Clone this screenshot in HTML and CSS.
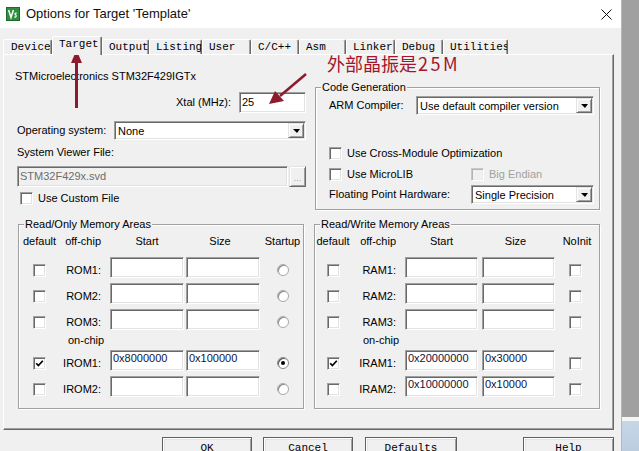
FILE: index.html
```html
<!DOCTYPE html>
<html>
<head>
<meta charset="utf-8">
<title>Options for Target 'Template'</title>
<link rel="stylesheet" href="styles.css">
</head>
<body>
<div class="screen">
  <div class="dialog">
    <div class="titlebar">
      <svg class="appicon" viewBox="0 0 14 14">
        <rect x="0.5" y="0.5" width="13" height="13" fill="#2f8d3e" stroke="#1d6a2a"/>
        <path d="M2.6 3 L5 10.5 L7.4 3" fill="none" stroke="#fff" stroke-width="1.5"/>
        <path d="M10.8 6.2 C9.2 5.6 8.2 6.6 9.4 7.6 C10.8 8.6 10.2 10.6 8.2 10" fill="none" stroke="#fff" stroke-width="1.2"/>
      </svg>
      <span class="title">Options for Target 'Template'</span>
      <svg class="close" viewBox="0 0 11 11">
        <path d="M0.5 0.5 L10.5 10.5 M10.5 0.5 L0.5 10.5" stroke="#111" stroke-width="1"/>
      </svg>
    </div>

    <div class="tabs">
      <div class="tab t-device">Device</div>
      <div class="tab t-target active">Target</div>
      <div class="tab t-output">Output</div>
      <div class="tab t-listing">Listing</div>
      <div class="tab t-user">User</div>
      <div class="tab t-cc">C/C++</div>
      <div class="tab t-asm">Asm</div>
      <div class="tab t-linker">Linker</div>
      <div class="tab t-debug">Debug</div>
      <div class="tab t-util">Utilities</div>
    </div>

    <div class="panel">
      <div class="top">
        <div class="left">
          <div class="device">STMicroelectronics STM32F429IGTx</div>
          <div class="xtal-row">
            <span>Xtal (MHz):</span>
            <div class="edit xtal">25</div>
          </div>
          <div class="os-row">
            <span class="os-label">Operating system:</span>
            <div class="select os"><span class="sel-text">None</span><span class="dd"><i class="tri"></i></span></div>
          </div>
          <div class="svf-label">System Viewer File:</div>
          <div class="svf-row">
            <div class="edit svf">STM32F429x.svd</div>
            <div class="dots">...</div>
          </div>
          <div class="check-row custom"><span class="cb"></span><span class="cb-label">Use Custom File</span></div>
        </div>

        <fieldset class="group code">
          <legend>Code Generation</legend>
          <div class="arm-row">
            <span class="arm-label">ARM Compiler:</span>
            <div class="select arm"><span class="sel-text">Use default compiler version</span><span class="dd"><i class="tri"></i></span></div>
          </div>
          <div class="check-row cmo"><span class="cb"></span><span class="cb-label">Use Cross-Module Optimization</span></div>
          <div class="check-row micro">
            <div class="check-row microlib"><span class="cb"></span><span class="cb-label">Use MicroLIB</span></div>
            <div class="check-row big"><span class="cb cb-disabled"></span><span class="cb-label">Big Endian</span></div>
          </div>
          <div class="fp-row">
            <span class="fp-label">Floating Point Hardware:</span>
            <div class="select fp"><span class="sel-text">Single Precision</span><span class="dd"><i class="tri"></i></span></div>
          </div>
        </fieldset>
      </div>

      <div class="mem">
        <fieldset class="group memgroup ro">
          <legend>Read/Only Memory Areas</legend>
          <div class="mrow head">
            <span class="c1">default</span><span class="c2">off-chip</span><span class="c3">Start</span><span class="c4">Size</span><span class="c5">Startup</span>
          </div>
          <div class="mrow r1">
            <span class="cb ctr"></span><span class="lbl">ROM1:</span><div class="edit"></div><div class="edit"></div><span class="radio ctr"></span>
          </div>
          <div class="mrow rn">
            <span class="cb ctr"></span><span class="lbl">ROM2:</span><div class="edit"></div><div class="edit"></div><span class="radio ctr"></span>
          </div>
          <div class="mrow rn">
            <span class="cb ctr"></span><span class="lbl">ROM3:</span><div class="edit"></div><div class="edit"></div><span class="radio ctr"></span>
          </div>
          <div class="onchip">on-chip</div>
          <div class="mrow ri">
            <span class="cb ctr"><svg class="tick" viewBox="0 0 9 9"><path d="M1.2 4.2 L3.4 6.6 L7.8 1.8" fill="none" stroke="#000" stroke-width="1.7"/></svg></span><span class="lbl">IROM1:</span><div class="edit">0x8000000</div><div class="edit">0x100000</div><span class="radio ctr on"><i></i></span>
          </div>
          <div class="mrow rn">
            <span class="cb ctr"></span><span class="lbl">IROM2:</span><div class="edit"></div><div class="edit"></div><span class="radio ctr"></span>
          </div>
        </fieldset>

        <fieldset class="group memgroup rw">
          <legend>Read/Write Memory Areas</legend>
          <div class="mrow head">
            <span class="c1">default</span><span class="c2">off-chip</span><span class="c3">Start</span><span class="c4">Size</span><span class="c5">NoInit</span>
          </div>
          <div class="mrow r1">
            <span class="cb ctr"></span><span class="lbl">RAM1:</span><div class="edit"></div><div class="edit"></div><span class="cb ni"></span>
          </div>
          <div class="mrow rn">
            <span class="cb ctr"></span><span class="lbl">RAM2:</span><div class="edit"></div><div class="edit"></div><span class="cb ni"></span>
          </div>
          <div class="mrow rn">
            <span class="cb ctr"></span><span class="lbl">RAM3:</span><div class="edit"></div><div class="edit"></div><span class="cb ni"></span>
          </div>
          <div class="onchip">on-chip</div>
          <div class="mrow ri">
            <span class="cb ctr"><svg class="tick" viewBox="0 0 9 9"><path d="M1.2 4.2 L3.4 6.6 L7.8 1.8" fill="none" stroke="#000" stroke-width="1.7"/></svg></span><span class="lbl">IRAM1:</span><div class="edit">0x20000000</div><div class="edit">0x30000</div><span class="cb ni"></span>
          </div>
          <div class="mrow rn">
            <span class="cb ctr"></span><span class="lbl">IRAM2:</span><div class="edit">0x10000000</div><div class="edit">0x10000</div><span class="cb ni"></span>
          </div>
        </fieldset>
      </div>
    </div>

    <div class="buttons">
      <div class="btn b-ok">OK</div>
      <div class="btn b-cancel">Cancel</div>
      <div class="btn b-defaults">Defaults</div>
      <div class="btn b-help">Help</div>
    </div>
  </div>

  <div class="backdrop">
    <div class="bd-top"></div>
    <div class="bd-line"></div>
    <div class="bd-bottom"></div>
  </div>
</div>

<div class="annot">
  <svg class="arrows" width="639" height="451" viewBox="0 0 639 451">
    <line x1="76.5" y1="60" x2="76.5" y2="108" stroke="#8e1b2c" stroke-width="3"/>
    <polygon points="76.5,50 71,63 82,63" fill="#8e1b2c"/>
    <line x1="306" y1="74" x2="280" y2="96" stroke="#8e1b2c" stroke-width="2.6"/>
    <polygon points="269,104 275,91 284,101" fill="#8e1b2c"/>
  </svg>
  <div class="note">外部晶振是<span class="note-num">25M</span></div>
</div>
</body>
</html>
```
FILE: styles.css
```css
* { box-sizing: border-box; }
html, body { margin: 0; padding: 0; }
body {
  width: 639px; height: 451px; overflow: hidden; position: relative;
  background: #f0f0f0; color: #000;
  font: 11px/13px "Liberation Sans", Arial, sans-serif;
}
.screen { display: flex; height: 451px; }
.dialog { width: 621px; flex: none; display: flex; flex-direction: column; }

/* right backdrop (window behind) */
.backdrop { flex: 1; display: flex; flex-direction: column; border-left: 1px solid #b8b8b8; }
.bd-top { flex: 1; background: #a0a0a0; }
.bd-line { height: 4px; background: #f5f5f5; }
.bd-bottom { height: 30px; background: linear-gradient(#c6d6e7, #bccde0); }

/* title bar */
.titlebar {
  height: 28px; flex: none; background: #fff;
  display: flex; align-items: center; padding: 0 9px 0 6px;
}
.appicon { width: 14px; height: 14px; flex: none; margin-top: -1px; }
.title { margin-left: 6px; font: 13px/16px "Liberation Sans", Arial, sans-serif; color: #111; }
.close { margin-left: auto; width: 11px; height: 11px; }

/* tabs */
.tabs {
  height: 26px; flex: none; display: flex; align-items: flex-end; padding-left: 3px;
  font: 11px/13px "Liberation Mono", "Courier New", monospace; color: #000;
}
.tab {
  height: 15px; padding: 1px 0 0 6px; background: #f0f0f0;
  border-top: 1px solid #fff; border-left: 1px solid #fff; border-right: 1px solid #696969;
  border-radius: 2px 2px 0 0; box-shadow: inset -1px 0 0 #a0a0a0;
  white-space: nowrap; overflow: hidden;
}
.tab.active { height: 19px; margin-bottom: -1px; position: relative; z-index: 1; }
.t-device { width: 49px; padding-left: 7px; }
.t-target { width: 50px; }
.t-output { width: 47px; }
.t-listing { width: 53px; }
.t-user { width: 49px; }
.t-cc { width: 48px; }
.t-asm { width: 47px; }
.t-linker { width: 49px; }
.t-debug { width: 48px; }
.t-util { width: 65px; }

/* tab page */
.panel {
  flex: none; margin-left: 3px; width: 611px; height: 376px;
  border: 1px solid #fff; border-right-color: #696969; border-bottom-color: #696969;
  box-shadow: inset -1px -1px 0 #a0a0a0;
  padding: 0 13px 0 11px; display: flex; flex-direction: column;
}
.top { height: 163px; flex: none; display: grid; grid-template-columns: 291px 285px; column-gap: 9px; align-items: start; }

/* common controls */
.edit {
  height: 21px; background: #fff; white-space: nowrap; overflow: hidden;
  border: 1px solid; border-color: #a0a0a0 #fff #fff #a0a0a0;
  box-shadow: inset 1px 1px 0 #696969, inset -1px -1px 0 #e3e3e3;
  padding: 0 2px;
}
.select {
  height: 19px; display: flex; background: #fff; padding: 1px;
  border: 1px solid; border-color: #a0a0a0 #fff #fff #a0a0a0;
  box-shadow: inset 1px 1px 0 #696969, inset -1px -1px 0 #e3e3e3;
}
.sel-text { flex: 1; padding: 2px 0 0 2px; white-space: nowrap; overflow: hidden; }
.dd {
  width: 16px; height: 15px; flex: none; background: #f0f0f0;
  border: 1px solid; border-color: #e3e3e3 #696969 #696969 #e3e3e3;
  box-shadow: inset 1px 1px 0 #fff, inset -1px -1px 0 #a0a0a0;
  display: flex; align-items: center; justify-content: center;
}
.tri { width: 0; height: 0; border-left: 4px solid transparent; border-right: 3px solid transparent; border-top: 4px solid #000; margin-left: 1px; }
.cb {
  width: 13px; height: 13px; flex: none; background: #fff;
  border: 1px solid; border-color: #a0a0a0 #fff #fff #a0a0a0;
  box-shadow: inset 1px 1px 0 #696969, inset -1px -1px 0 #e3e3e3;
  display: flex; align-items: center; justify-content: center;
}
.cb-disabled { background: #f0f0f0; border-color: #c8c8c8 #fff #fff #c8c8c8; box-shadow: inset 1px 1px 0 #b4b4b4, inset -1px -1px 0 #ececec; }
.tick { width: 9px; height: 9px; }
.check-row { display: flex; align-items: center; }
.cb-label { margin-left: 5px; white-space: nowrap; }
.radio {
  width: 12px; height: 12px; border-radius: 50%; background: #fff;
  border: 1px solid #a8a8a8; box-shadow: inset 1px 1px 0 #8a8a8a;
  display: flex; align-items: center; justify-content: center;
}
.radio.on { border-color: #8a8a8a; box-shadow: inset 1px 1px 0 #555; }
.radio i { width: 4px; height: 4px; border-radius: 50%; background: #000; }

/* left column */
.left { display: flex; flex-direction: column; }
.device { margin-top: 15px; }
.xtal-row { margin-top: 9px; display: flex; justify-content: flex-end; align-items: center; gap: 8px; }
.xtal { width: 67px; padding-top: 3px; }
.os-row { margin-top: 8px; display: flex; align-items: center; }
.os-label { width: 99px; padding-left: 2px; }
.os { width: 192px; }
.svf-label { margin-top: 6px; padding-left: 2px; }
.svf-row { margin-top: 7px; display: flex; gap: 1px; padding-left: 2px; }
.svf { width: 271px; background: #f0f0f0; color: #6d6d6d; padding-top: 3px; }
.dots {
  width: 17px; height: 21px; background: #f0f0f0;
  border: 1px solid; border-color: #e3e3e3 #696969 #696969 #e3e3e3;
  box-shadow: inset 1px 1px 0 #fff, inset -1px -1px 0 #a0a0a0;
  color: #a0a0a0; font-size: 9px; line-height: 9px; text-align: center; padding-top: 7px;
}
.custom { margin-top: 5px; padding-left: 5px; }

/* group boxes */
.group {
  margin: 0; padding: 0; min-width: 0;
  border: 1px solid #a0a0a0;
  box-shadow: inset 1px 1px 0 #fff, 1px 1px 0 #fff;
}
.group legend { padding: 0 1px; margin-left: 5px; background: #f0f0f0; line-height: 13px; }
.code { margin-top: 26px; height: 129px; }
.arm-row { margin-top: 2px; display: flex; align-items: center; }
.arm-label { width: 100px; padding-left: 13px; }
.arm { width: 178px; }
.cmo { margin-top: 32px; padding-left: 13px; }
.micro { margin-top: 8px; padding-left: 13px; }
.microlib { width: 142px; }
.big .cb-label { color: #a0a0a0; }
.fp-row { margin-top: 4px; display: flex; align-items: center; }
.fp-label { width: 155px; padding-left: 13px; }
.fp { width: 123px; }

/* memory areas */
.mem { display: grid; grid-template-columns: 286px 286px; column-gap: 10px; margin-left: 3px; }
.memgroup { height: 191px; }
.mrow { display: grid; align-items: center; }
.ro .mrow { grid-template-columns: 41px 50px 76px 76px 1fr; }
.rw .mrow { grid-template-columns: 36px 54px 77px 73px 1fr; }
.mrow .c1, .mrow .c3, .mrow .c4, .mrow .c5 { text-align: center; }
.mrow .c2, .mrow .lbl { text-align: right; padding-right: 9px; white-space: nowrap; }
.ro .c3 { padding-right: 2px; }
.ro .c4 { padding-right: 8px; }
.rw .c3 { padding-right: 4px; }
.rw .c4 { padding-right: 6px; }
.head { margin-top: 4px; }
.r1 { margin-top: 9px; }
.rn { margin-top: 5px; }
.ri { margin-top: 3px; }
.onchip { margin-top: 4px; height: 13px; }
.ro .onchip { padding-left: 49px; }
.rw .onchip { padding-left: 48px; }
.mem .edit { width: 74px; padding-top: 1px; color: #10133a; }
.rw .edit { width: 73px; }
.ctr { justify-self: center; }
.mrow .cb, .mrow .lbl, .mrow .radio { margin-top: 5px; }
.mrow .ni { justify-self: start; margin-left: 14px; }

/* buttons */
.buttons {
  flex: 1; display: flex; align-items: flex-start; margin-top: 7px;
  font: 11px/13px "Liberation Mono", "Courier New", monospace;
}
.btn {
  height: 23px; text-align: center; padding-top: 4px; background: #f0f0f0;
  border: 1px solid #5f5f5f;
  box-shadow: inset 1px 1px 0 #fff, inset -1px -1px 0 #a0a0a0, inset 2px 2px 0 #e3e3e3;
}
.b-ok { margin-left: 162px; width: 90px; }
.b-cancel { margin-left: 11px; width: 90px; }
.b-defaults { margin-left: 12px; width: 92px; }
.b-help { margin-left: 66px; width: 91px; }

/* annotation overlay */
.annot { position: absolute; left: 0; top: 0; width: 639px; height: 451px; pointer-events: none; }
.arrows { position: absolute; left: 0; top: 0; }
.note {
  position: absolute; left: 327px; top: 54px; white-space: nowrap;
  font: 18px/18px "Noto Sans CJK SC", sans-serif; color: #a3162d;
}
.note-num { letter-spacing: 2.5px; margin-left: 1px; }
```
